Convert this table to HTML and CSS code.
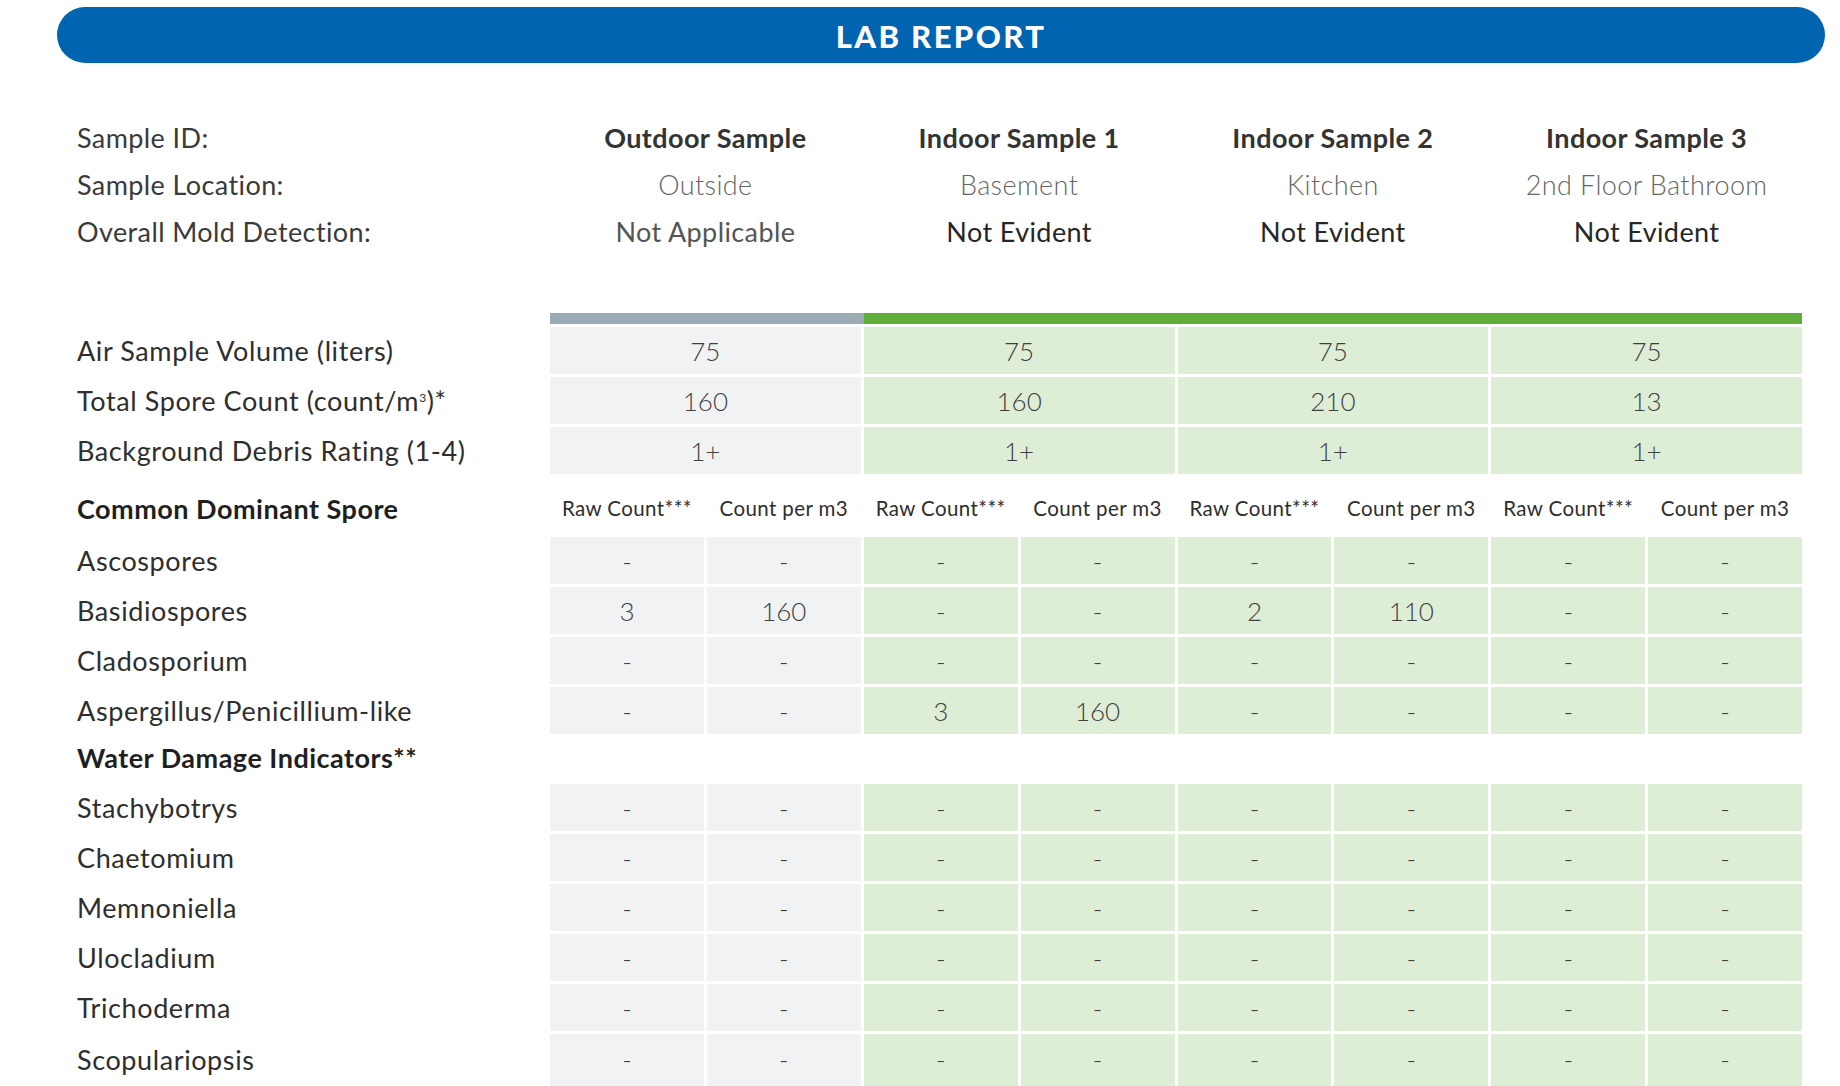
FILE: index.html
```
<!DOCTYPE html>
<html lang="en">
<head>
<meta charset="utf-8">
<title>Lab Report</title>
<link rel="stylesheet" href="styles.css">
</head>
<body>
<header class="banner"><h1 class="banner-title">LAB REPORT</h1></header>

<section class="info">
  <div class="info-label">Sample ID:</div>
  <div class="info-val id">Outdoor Sample</div>
  <div class="info-val id">Indoor Sample 1</div>
  <div class="info-val id">Indoor Sample 2</div>
  <div class="info-val id">Indoor Sample 3</div>

  <div class="info-label">Sample Location:</div>
  <div class="info-val loc">Outside</div>
  <div class="info-val loc">Basement</div>
  <div class="info-val loc">Kitchen</div>
  <div class="info-val loc">2nd Floor Bathroom</div>

  <div class="info-label">Overall Mold Detection:</div>
  <div class="info-val na">Not Applicable</div>
  <div class="info-val ev">Not Evident</div>
  <div class="info-val ev">Not Evident</div>
  <div class="info-val ev">Not Evident</div>
</section>

<section class="data">
  <div class="spacer"></div>
  <div class="colorbar"></div>

  <div class="label">Air Sample Volume (liters)</div>
  <div class="cell wide grey">75</div>
  <div class="cell wide green">75</div>
  <div class="cell wide green">75</div>
  <div class="cell wide green">75</div>

  <div class="label">Total Spore Count (count/m<sup>3</sup>)*</div>
  <div class="cell wide grey">160</div>
  <div class="cell wide green">160</div>
  <div class="cell wide green">210</div>
  <div class="cell wide green">13</div>

  <div class="label">Background Debris Rating (1-4)</div>
  <div class="cell wide grey">1+</div>
  <div class="cell wide green">1+</div>
  <div class="cell wide green">1+</div>
  <div class="cell wide green">1+</div>

  <div class="label section">Common Dominant Spore</div>
  <div class="sub">Raw Count***</div><div class="sub">Count per m3</div>
  <div class="sub">Raw Count***</div><div class="sub">Count per m3</div>
  <div class="sub">Raw Count***</div><div class="sub">Count per m3</div>
  <div class="sub">Raw Count***</div><div class="sub">Count per m3</div>

  <div class="label">Ascospores</div>
  <div class="cell grey">-</div><div class="cell grey">-</div>
  <div class="cell green">-</div><div class="cell green">-</div>
  <div class="cell green">-</div><div class="cell green">-</div>
  <div class="cell green">-</div><div class="cell green">-</div>

  <div class="label">Basidiospores</div>
  <div class="cell grey">3</div><div class="cell grey">160</div>
  <div class="cell green">-</div><div class="cell green">-</div>
  <div class="cell green">2</div><div class="cell green">110</div>
  <div class="cell green">-</div><div class="cell green">-</div>

  <div class="label">Cladosporium</div>
  <div class="cell grey">-</div><div class="cell grey">-</div>
  <div class="cell green">-</div><div class="cell green">-</div>
  <div class="cell green">-</div><div class="cell green">-</div>
  <div class="cell green">-</div><div class="cell green">-</div>

  <div class="label">Aspergillus/Penicillium-like</div>
  <div class="cell grey">-</div><div class="cell grey">-</div>
  <div class="cell green">3</div><div class="cell green">160</div>
  <div class="cell green">-</div><div class="cell green">-</div>
  <div class="cell green">-</div><div class="cell green">-</div>

  <div class="label section full">Water Damage Indicators**</div>

  <div class="label">Stachybotrys</div>
  <div class="cell grey">-</div><div class="cell grey">-</div>
  <div class="cell green">-</div><div class="cell green">-</div>
  <div class="cell green">-</div><div class="cell green">-</div>
  <div class="cell green">-</div><div class="cell green">-</div>

  <div class="label">Chaetomium</div>
  <div class="cell grey">-</div><div class="cell grey">-</div>
  <div class="cell green">-</div><div class="cell green">-</div>
  <div class="cell green">-</div><div class="cell green">-</div>
  <div class="cell green">-</div><div class="cell green">-</div>

  <div class="label">Memnoniella</div>
  <div class="cell grey">-</div><div class="cell grey">-</div>
  <div class="cell green">-</div><div class="cell green">-</div>
  <div class="cell green">-</div><div class="cell green">-</div>
  <div class="cell green">-</div><div class="cell green">-</div>

  <div class="label">Ulocladium</div>
  <div class="cell grey">-</div><div class="cell grey">-</div>
  <div class="cell green">-</div><div class="cell green">-</div>
  <div class="cell green">-</div><div class="cell green">-</div>
  <div class="cell green">-</div><div class="cell green">-</div>

  <div class="label">Trichoderma</div>
  <div class="cell grey">-</div><div class="cell grey">-</div>
  <div class="cell green">-</div><div class="cell green">-</div>
  <div class="cell green">-</div><div class="cell green">-</div>
  <div class="cell green">-</div><div class="cell green">-</div>

  <div class="label">Scopulariopsis</div>
  <div class="cell grey">-</div><div class="cell grey">-</div>
  <div class="cell green">-</div><div class="cell green">-</div>
  <div class="cell green">-</div><div class="cell green">-</div>
  <div class="cell green">-</div><div class="cell green">-</div>
</section>
</body>
</html>
```
FILE: styles.css
```
* { box-sizing: border-box; }

html, body {
  margin: 0;
  padding: 0;
  background: #ffffff;
}

body {
  width: 1840px;
  height: 1086px;
  overflow: hidden;
  font-family: Lato, "Open Sans", "Liberation Sans", sans-serif;
  color: #333333;
}

.banner {
  margin: 7px 15px 0 57px;
  height: 56px;
  border-radius: 28px;
  background: #0064b0;
  display: flex;
  align-items: center;
  justify-content: center;
}

.banner-title {
  margin: 0;
  color: #ffffff;
  font-family: Lato, "Liberation Sans", sans-serif;
  font-weight: 900;
  font-size: 31px;
  letter-spacing: 2.4px;
  padding-top: 2px;
}

.info,
.data {
  display: grid;
  grid-template-columns: 470px repeat(8, 1fr);
  column-gap: 3px;
  padding: 0 38px 0 77px;
}

.info {
  margin-top: 51px;
  grid-template-rows: repeat(3, 47px);
  font-size: 27px;
  letter-spacing: 0.4px;
}

.info-label {
  display: flex;
  align-items: center;
  color: #3a3a3a;
  font-weight: 400;
}

.info-val {
  grid-column: span 2;
  display: flex;
  align-items: center;
  justify-content: center;
}

.info-val.id { color: #333333; font-weight: 700; }
.info-val.loc { color: #666666; font-weight: 300; }
.info-val.na { color: #555555; font-weight: 400; }
.info-val.ev { color: #262626; font-weight: 400; }

.data {
  margin-top: 58px;
  row-gap: 3px;
  grid-template-rows: 11px repeat(3, 47px) 57px repeat(4, 47px) 44px repeat(5, 47px) 53px;
}

.spacer { grid-column: 1; }

.colorbar {
  grid-column: 2 / span 8;
  background: linear-gradient(to right, #9aabb5 0, #9aabb5 25.05%, #5fae3c 25.05%, #5fae3c 100%);
}

.label {
  grid-column: 1;
  display: flex;
  align-items: center;
  font-size: 27px;
  letter-spacing: 0.6px;
  color: #2e2e2e;
  font-weight: 400;
  white-space: nowrap;
}

.label:last-of-type,
.label:nth-last-child(9) {
  align-items: flex-start;
  padding-top: 9px;
}

.label sup {
  font-size: 12px;
  line-height: 0;
  position: relative;
  top: -3px;
  vertical-align: super;
}

.label.section {
  font-weight: 700;
  color: #1f1f1f;
  padding-top: 6px;
  letter-spacing: 0.5px;
}

.label.full {
  grid-column: 1 / -1;
  padding-top: 0;
  padding-bottom: 4px;
}

.sub {
  display: flex;
  align-items: center;
  justify-content: center;
  font-size: 20.5px;
  color: #2e2e2e;
  letter-spacing: 0.4px;
  padding-top: 5px;
  white-space: nowrap;
}

.cell {
  display: flex;
  align-items: center;
  justify-content: center;
  font-size: 26px;
  font-weight: 300;
  color: #3f3f3f;
}

.data > .cell:nth-last-child(-n+8) {
  align-items: flex-start;
  padding-top: 9px;
}

.cell.wide { grid-column: span 2; }

.grey { background: #f1f2f3; }
.green { background: #deedd5; }
```
